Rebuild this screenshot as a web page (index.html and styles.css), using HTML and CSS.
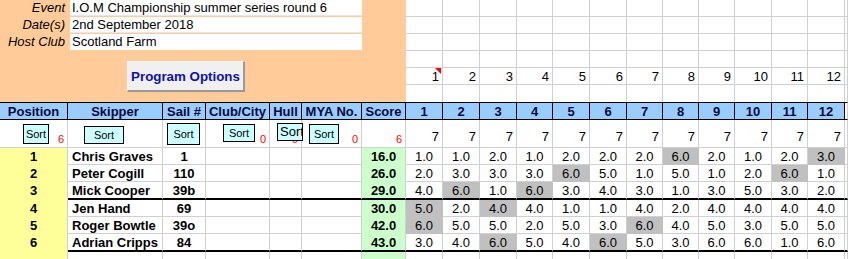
FILE: index.html
```html
<!DOCTYPE html>
<html lang="en">
<head>
    <meta charset="UTF-8">
    <meta name="viewport" content="width=device-width, initial-scale=1.0">
    <title>I.O.M Championship - Results</title>
    <link rel="stylesheet" href="styles.css">
</head>
<body>

<table class="sheet">
    <colgroup>
        <col class="c-pos"><col class="c-skip"><col class="c-sail"><col class="c-club"><col class="c-hull"><col class="c-mya"><col class="c-score">
        <col class="c-r"><col class="c-r"><col class="c-r"><col class="c-r n"><col class="c-r"><col class="c-r">
        <col class="c-r n"><col class="c-r n"><col class="c-r n"><col class="c-r"><col class="c-r n"><col class="c-r">
        <col class="c-end">
    </colgroup>

    <!-- EVENT DETAILS -->
    <tr class="top">
        <td class="info" colspan="7" rowspan="6">
            <div class="field-row"><span class="label">Event</span><span class="field">I.O.M Championship summer series round 6</span></div>
            <div class="field-row"><span class="label">Date(s)</span><span class="field">2nd September 2018</span></div>
            <div class="field-row"><span class="label">Host Club</span><span class="field">Scotland Farm</span></div>
            <button class="prog-btn">Program Options</button>
        </td>
        <td></td><td></td><td></td><td></td><td></td><td></td><td></td><td></td><td></td><td></td><td></td><td></td><td></td>
    </tr>
    <tr class="top"><td></td><td></td><td></td><td></td><td></td><td></td><td></td><td></td><td></td><td></td><td></td><td></td><td></td></tr>
    <tr class="top"><td></td><td></td><td></td><td></td><td></td><td></td><td></td><td></td><td></td><td></td><td></td><td></td><td></td></tr>
    <tr class="top"><td></td><td></td><td></td><td></td><td></td><td></td><td></td><td></td><td></td><td></td><td></td><td></td><td></td></tr>
    <tr class="top race-nums">
        <td class="note">1</td><td>2</td><td>3</td><td>4</td><td>5</td><td>6</td><td>7</td><td>8</td><td>9</td><td>10</td><td>11</td><td>12</td><td></td>
    </tr>
    <tr class="top gap"><td></td><td></td><td></td><td></td><td></td><td></td><td></td><td></td><td></td><td></td><td></td><td></td><td></td></tr>

    <!-- COLUMN HEADERS -->
    <tr class="head">
        <th>Position</th><th>Skipper</th><th>Sail #</th><th>Club/City</th><th>Hull</th><th>MYA No.</th><th>Score</th>
        <th>1</th><th>2</th><th>3</th><th>4</th><th>5</th><th>6</th><th>7</th><th>8</th><th>9</th><th>10</th><th>11</th><th>12</th>
        <td class="end"></td>
    </tr>

    <!-- SORT BUTTONS -->
    <tr class="sort-row">
        <td><div class="sortbox"><button class="sort-btn s-pos">Sort</button><span class="count">6</span></div></td>
        <td><div class="sortbox"><button class="sort-btn s-skip">Sort</button></div></td>
        <td><div class="sortbox"><button class="sort-btn s-sail">Sort</button></div></td>
        <td><div class="sortbox"><button class="sort-btn s-club">Sort</button><span class="count">0</span></div></td>
        <td><div class="sortbox"><button class="sort-btn s-hull">Sort</button><span class="count">0</span></div></td>
        <td><div class="sortbox"><button class="sort-btn s-mya">Sort</button><span class="count">0</span></div></td>
        <td><div class="sortbox"><span class="count">6</span></div></td>
        <td class="races">7</td><td class="races">7</td><td class="races">7</td><td class="races">7</td><td class="races">7</td><td class="races">7</td>
        <td class="races">7</td><td class="races">7</td><td class="races">7</td><td class="races">7</td><td class="races">7</td><td class="races">7</td>
        <td></td>
    </tr>

    <!-- RESULTS -->
    <tr class="row">
        <td class="pos">1</td><td class="name">Chris Graves</td><td class="sail">1</td><td></td><td></td><td></td><td class="score">16.0</td>
        <td>1.0</td><td>1.0</td><td>2.0</td><td>1.0</td><td>2.0</td><td>2.0</td><td>2.0</td><td class="drop">6.0</td><td>2.0</td><td>1.0</td><td>2.0</td><td class="drop">3.0</td><td></td>
    </tr>
    <tr class="row">
        <td class="pos">2</td><td class="name">Peter Cogill</td><td class="sail">110</td><td></td><td></td><td></td><td class="score">26.0</td>
        <td>2.0</td><td>3.0</td><td>3.0</td><td>3.0</td><td class="drop">6.0</td><td>5.0</td><td>1.0</td><td>5.0</td><td>1.0</td><td>2.0</td><td class="drop">6.0</td><td>1.0</td><td></td>
    </tr>
    <tr class="row sep">
        <td class="pos">3</td><td class="name">Mick Cooper</td><td class="sail">39b</td><td></td><td></td><td></td><td class="score">29.0</td>
        <td>4.0</td><td class="drop">6.0</td><td>1.0</td><td class="drop">6.0</td><td>3.0</td><td>4.0</td><td>3.0</td><td>1.0</td><td>3.0</td><td>5.0</td><td>3.0</td><td>2.0</td><td></td>
    </tr>
    <tr class="row">
        <td class="pos">4</td><td class="name">Jen Hand</td><td class="sail">69</td><td></td><td></td><td></td><td class="score">30.0</td>
        <td class="drop">5.0</td><td>2.0</td><td class="drop">4.0</td><td>4.0</td><td>1.0</td><td>1.0</td><td>4.0</td><td>2.0</td><td>4.0</td><td>4.0</td><td>4.0</td><td>4.0</td><td></td>
    </tr>
    <tr class="row">
        <td class="pos">5</td><td class="name">Roger Bowtle</td><td class="sail">39o</td><td></td><td></td><td></td><td class="score">42.0</td>
        <td class="drop">6.0</td><td>5.0</td><td>5.0</td><td>2.0</td><td>5.0</td><td>3.0</td><td class="drop">6.0</td><td>4.0</td><td>5.0</td><td>3.0</td><td>5.0</td><td>5.0</td><td></td>
    </tr>
    <tr class="row sep">
        <td class="pos">6</td><td class="name">Adrian Cripps</td><td class="sail">84</td><td></td><td></td><td></td><td class="score">43.0</td>
        <td>3.0</td><td>4.0</td><td class="drop">6.0</td><td>5.0</td><td>4.0</td><td class="drop">6.0</td><td>5.0</td><td>3.0</td><td>6.0</td><td>6.0</td><td>1.0</td><td>6.0</td><td></td>
    </tr>
    <tr class="row">
        <td class="pos"></td><td></td><td></td><td></td><td></td><td></td><td class="score"></td>
        <td></td><td></td><td></td><td></td><td></td><td></td><td></td><td></td><td></td><td></td><td></td><td></td><td></td>
    </tr>
</table>

</body>
</html>
```

FILE: styles.css
```css
* { box-sizing: border-box; }
html, body { margin: 0; overflow: hidden; background: #fff; }
body { font-family: "Liberation Sans", Arial, sans-serif; font-size: 13px; color: #000; }

/* GRADE DA PLANILHA */
.sheet { table-layout: fixed; width: 848px; border-collapse: separate; border-spacing: 0; }
.sheet td, .sheet th {
    padding: 0; line-height: 15px; white-space: nowrap;
    border-right: 1px solid #d0d0d0; border-bottom: 1px solid #d0d0d0;
    text-align: center; vertical-align: middle;
}

.c-pos { width: 68px; }
.c-skip { width: 95px; }
.c-sail { width: 43px; }
.c-club { width: 64px; }
.c-hull { width: 32px; }
.c-mya { width: 60px; }
.c-score { width: 44px; }
.c-r { width: 37px; }
.c-r.n { width: 36px; }
.c-end { width: 3px; }

/* CABECALHO LARANJA */
tr.top { height: 17px; }
tr.gap td { border-bottom: 0; }

.sheet td.info {
    background: #ffcc99; border: 0; vertical-align: top; text-align: left;
}
.field-row { display: flex; height: 17px; }
.label { width: 65px; text-align: right; font-style: italic; line-height: 16px; }
.field {
    margin-left: 5px; width: 292px; height: 16px; padding-left: 2px;
    background: #fff; line-height: 16px; border-bottom: 1px solid #e6e6e6;
}
.field-row:last-of-type .field { border-bottom: 0; }

.prog-btn {
    display: block; margin: 10px 0 0 127px; width: 118px; height: 31px; padding: 0;
    font: bold 13.33px "Liberation Sans", Arial, sans-serif; color: #1010b0;
    background: #f0f0f0; border: 1px solid #f8f8f8;
    border-right: 2px solid #9a9a9a; border-bottom: 2px solid #9a9a9a;
}

.race-nums td { text-align: right; padding-right: 3px; }
.sheet td.note { position: relative; }
.note::after {
    content: ''; position: absolute; top: 0; right: 1px;
    border-top: 6px solid #ff0000; border-left: 6px solid transparent;
}

/* TITULOS DAS COLUNAS */
tr.head { height: 18px; }
.sheet .head th {
    background: #99ccff; color: #0a0a3a; font-weight: bold;
    border-top: 1px solid #000; border-right: 1px solid #000; border-bottom: 1px solid #000;
}
.sheet .head td.end { border-top: 1px solid #000; border-bottom: 1px solid #000; }

/* LINHA DE ORDENAR */
tr.sort-row { height: 28px; }
.sort-row td { vertical-align: top; }
.sortbox { display: flex; align-items: flex-start; height: 27px; }
.sort-btn {
    flex-shrink: 0; position: relative; z-index: 1; padding: 0;
    background: #ccffff; border: 1px solid #000; color: #000;
    font: 11px "Liberation Sans", Arial, sans-serif;
}
.s-pos { margin: 4px 0 0 23px; width: 26px; height: 20px; }
.s-skip { margin: 6px 0 0 16px; width: 40px; height: 18px; }
.s-sail { margin: 3px 0 0 4px; width: 33px; height: 22px; }
.s-club { margin: 4px 0 0 17px; width: 32px; height: 18px; }
.s-hull {
    margin: 3px -14px 0 7px; width: 26px; height: 18px; overflow: hidden;
    font-size: 13px; text-align: left; padding-left: 2px; line-height: 12px; vertical-align: top;
}
.s-mya { margin: 4px 0 0 7px; width: 30px; height: 20px; }
.count {
    align-self: flex-end; margin-left: auto; padding: 0 3px 2px 0;
    color: #ff0000; font-size: 11px; line-height: 11px;
}
.sheet td.races { vertical-align: bottom; text-align: right; padding: 0 3px 3px 0; }

/* RESULTADOS */
tr.row { height: 17px; }
tr.row.sep { height: 18px; }
.sep td { border-bottom: 2px solid #000 !important; }
.sheet td.pos { background: #ffff99; font-weight: bold; border-bottom: 1px solid #ffff99 !important; }
.sheet td.name { text-align: left; padding-left: 4px; font-weight: bold; }
.sheet td.sail { font-weight: bold; }
.sheet td.score { background: #ccffcc; font-weight: bold; border-bottom-color: #ccffcc; }
.sheet td.drop { background: #c0c0c0; border-color: #c0c0c0; }
```
